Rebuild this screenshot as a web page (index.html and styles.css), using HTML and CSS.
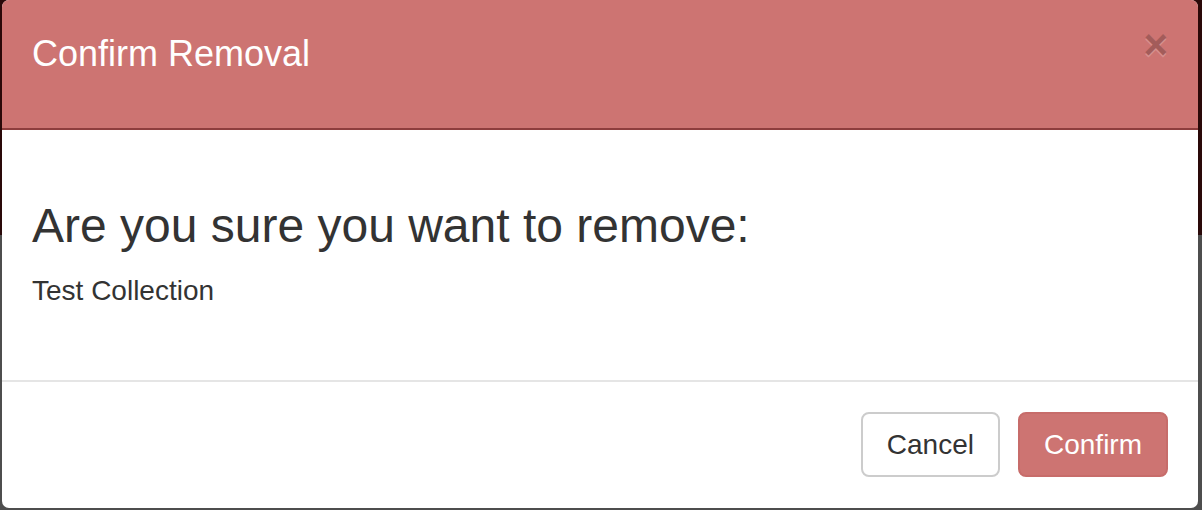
FILE: index.html
```html
<!DOCTYPE html>
<html>
  <head>
    <title>Confirm Removal</title>
    <link rel="stylesheet" href="styles.css">
  </head>
  <body>
    <div class="backdrop">
      <div class="modal">
        <div class="modal-header">
          <h4 class="modal-title">Confirm Removal</h4>
          <button type="button" class="close">&times;</button>
        </div>
        <div class="modal-body">
          <h3>Are you sure you want to remove:</h3>
          <p>Test Collection</p>
        </div>
        <div class="modal-footer">
          <button type="button" class="btn btn-default">Cancel</button>
          <button type="button" class="btn btn-danger">Confirm</button>
        </div>
      </div>
    </div>
  </body>
</html>
```

FILE: styles.css
```css
html,
body {
  margin: 0;
  height: 100%;
}
body {
  font-family: "Liberation Sans", Arial, sans-serif;
  color: #333;
  background: linear-gradient(#2a0909 0, #2a0909 235px, #4e4e4e 235px, #4e4e4e 100%);
}
.backdrop {
  padding: 0 4px 2px 2px;
}
.modal {
  background-color: #fff;
  border-radius: 7px;
  overflow: hidden;
  height: 508px;
}
.modal-header {
  display: flex;
  justify-content: space-between;
  align-items: flex-start;
  height: 100px;
  padding: 28px 30px 0;
  background-color: #cd7472;
  border-bottom: 2px solid #8e3d3d;
}
.modal-title {
  margin: 0;
  font-size: 36px;
  font-weight: 400;
  line-height: 51px;
  color: #fff;
}
.close {
  margin-top: -4px;
  padding: 0;
  border: 0;
  background: transparent;
  font-family: "Liberation Sans", Arial, sans-serif;
  font-size: 42px;
  font-weight: 700;
  line-height: 1;
  color: #000;
  text-shadow: 0 2px 0 #fff;
  opacity: 0.2;
  cursor: pointer;
}
.modal-body {
  height: 190px;
  padding: 30px;
}
.modal-body h3 {
  margin: 39px 0 19px;
  font-size: 48px;
  font-weight: 400;
  line-height: 53px;
}
.modal-body p {
  margin: 0;
  font-size: 28px;
  line-height: 40px;
}
.modal-footer {
  display: flex;
  justify-content: flex-end;
  gap: 18px;
  padding: 30px 30px;
  border-top: 2px solid #e5e5e5;
}
.btn {
  height: 65px;
  padding: 0 24px;
  font-family: "Liberation Sans", Arial, sans-serif;
  font-size: 28px;
  line-height: 61px;
  border: 2px solid #ccc;
  border-radius: 8px;
  cursor: pointer;
}
.btn-default {
  background-color: #fff;
  color: #333;
}
.btn-danger {
  background-color: #cd7472;
  border-color: #c76c6a;
  color: #fff;
}
```
